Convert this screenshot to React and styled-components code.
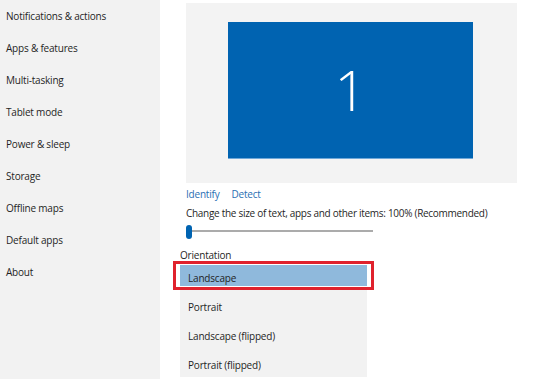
import React from 'react';
import styled, { createGlobalStyle } from 'styled-components';

const GlobalStyle = createGlobalStyle`
  html, body {
    margin: 0;
    padding: 0;
    background: #fff;
  }
  body {
    font-family: "Open Sans", "Noto Sans", sans-serif;
    font-size: 10px;
    letter-spacing: -0.2px;
    color: #1a1a1a;
  }
`;

const navItems = [
  'Notifications & actions',
  'Apps & features',
  'Multi-tasking',
  'Tablet mode',
  'Power & sleep',
  'Storage',
  'Offline maps',
  'Default apps',
  'About',
];

const orientations = ['Landscape', 'Portrait', 'Landscape (flipped)', 'Portrait (flipped)'];

function App() {
  return (
    <>
      <GlobalStyle />
      <Window>
        <Sidebar>
          {navItems.map((item) => (
            <NavItem key={item}>{item}</NavItem>
          ))}
        </Sidebar>
        <Main>
          <Preview>
            <Monitor>1</Monitor>
          </Preview>
          <LinkRow>
            <Link href="#">Identify</Link>
            <Link href="#">Detect</Link>
          </LinkRow>
          <Label>Change the size of text, apps and other items: 100% (Recommended)</Label>
          <Slider>
            <Track />
            <Thumb />
          </Slider>
          <Orientation>
            <OrientationLabel>Orientation</OrientationLabel>
            <Options>
              {orientations.map((o, i) => (
                <Option key={o} selected={i === 0}>{o}</Option>
              ))}
            </Options>
          </Orientation>
        </Main>
      </Window>
    </>
  );
}

export default App;

const Window = styled.div`
  display: flex;
  width: 537px;
  height: 379px;
  overflow: hidden;
`;

const Sidebar = styled.nav`
  width: 160px;
  flex-shrink: 0;
  background: #f2f2f2;
  display: flex;
  flex-direction: column;
`;

const NavItem = styled.div`
  height: 32px;
  line-height: 32px;
  padding-left: 6px;
  color: #1f1f1f;
  white-space: nowrap;
`;

const Main = styled.main`
  flex: 1;
  padding: 3px 0 0 26px;
  display: flex;
  flex-direction: column;
  align-items: flex-start;
`;

const Preview = styled.div`
  width: 331px;
  height: 180px;
  background: #f3f3f3;
  padding: 19px 0 0 42px;
  box-sizing: border-box;
`;

const Monitor = styled.div`
  width: 245px;
  height: 137px;
  background: #0063b1;
  border-bottom: 1px solid #6fa8d8;
  box-sizing: border-box;
  color: #fff;
  font-weight: 300;
  font-size: 56px;
  letter-spacing: 0;
  display: flex;
  align-items: center;
  justify-content: center;
  padding-bottom: 2px;
`;

const LinkRow = styled.div`
  display: flex;
  gap: 12px;
  margin-top: 3px;
  line-height: 16px;
`;

const Link = styled.a`
  color: #2a6fb3;
  text-decoration: none;
`;

const Label = styled.div`
  margin-top: 3px;
  line-height: 16px;
  letter-spacing: -0.29px;
  color: #1f1f1f;
  white-space: nowrap;
`;

const Slider = styled.div`
  position: relative;
  width: 187px;
  height: 18px;
  margin-top: 1px;
  display: flex;
  align-items: center;
`;

const Track = styled.div`
  flex: 1;
  height: 2px;
  background: #ababab;
`;

const Thumb = styled.div`
  position: absolute;
  left: 0;
  top: 3px;
  width: 6px;
  height: 14px;
  border-radius: 3px;
  background: #0063b1;
`;

const Orientation = styled.section`
  margin: 7px 0 0 -6px;
  display: flex;
  flex-direction: column;
`;

const OrientationLabel = styled.div`
  line-height: 14px;
  padding-top: 1px;
  color: #1f1f1f;
`;

const Options = styled.div`
  width: 187px;
  margin-top: -1px;
  background: #f2f2f2;
`;

const Option = styled.div`
  position: relative;
  box-sizing: border-box;
  height: 29px;
  padding: 6px 0 0 8px;
  line-height: 23px;
  color: #1f1f1f;
  background: ${(p) => (p.selected ? '#8fb9dc' : 'transparent')};

  ${(p) =>
    p.selected &&
    `
    &::after {
      content: '';
      position: absolute;
      top: 0;
      bottom: 0;
      left: -7px;
      right: -7px;
      border: 3px solid #e0222d;
      box-shadow: inset 0 0 0 1px #fff;
    }
  `}
`;
